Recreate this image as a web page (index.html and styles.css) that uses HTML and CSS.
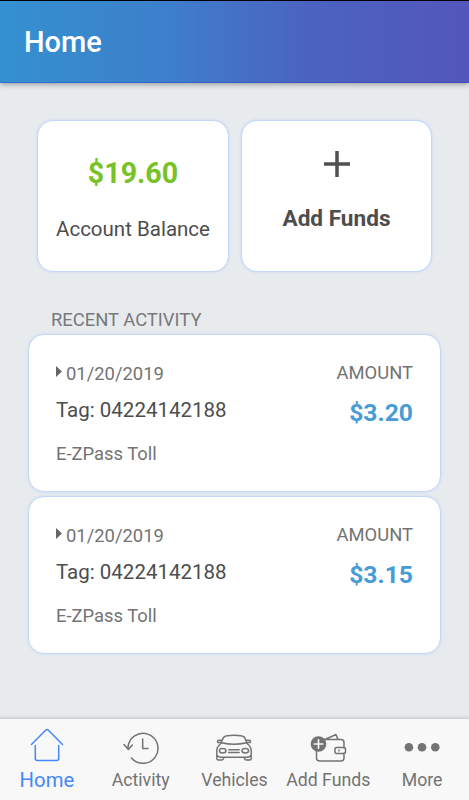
FILE: index.html
```html
<!DOCTYPE html>
<html lang="en">
<head>
<meta charset="utf-8">
<title>Home</title>
<link rel="stylesheet" href="styles.css">
</head>
<body>
<header class="header"><h1 class="title">Home</h1></header>
<main class="main">
  <section class="tiles">
    <div class="card tile">
      <div class="balance">$19.60</div>
      <div class="balance-label">Account Balance</div>
    </div>
    <div class="card tile">
      <svg class="plus" viewBox="0 0 28 28" width="28" height="28"><path d="M14 1v26M1 14h26"/></svg>
      <div class="add-label">Add Funds</div>
    </div>
  </section>
  <h2 class="section-title">RECENT ACTIVITY</h2>
  <section class="list">
    <article class="card entry">
      <div class="info">
        <div class="date"><span class="arrow"></span><span>01/20/2019</span></div>
        <div class="tag">Tag: 04224142188</div>
        <div class="kind">E-ZPass Toll</div>
      </div>
      <div class="cost">
        <div class="amount-label">AMOUNT</div>
        <div class="amount">$3.20</div>
      </div>
    </article>
    <article class="card entry">
      <div class="info">
        <div class="date"><span class="arrow"></span><span>01/20/2019</span></div>
        <div class="tag">Tag: 04224142188</div>
        <div class="kind">E-ZPass Toll</div>
      </div>
      <div class="cost">
        <div class="amount-label">AMOUNT</div>
        <div class="amount">$3.15</div>
      </div>
    </article>
  </section>
</main>
<nav class="nav">
  <a class="item active">
    <svg class="icon" viewBox="0 0 40 40" width="40" height="40"><path d="M4.500 20.500L18.600 6.300Q20 4.900 21.400 6.300L35.500 20.500M8.300 21.500V34.500Q8.300 36.500 10.300 36.500H29.700Q31.700 36.500 31.700 34.500V21.500"/></svg>
    <span class="item-label">Home</span>
  </a>
  <a class="item">
    <svg class="icon" viewBox="0 0 40 40" width="40" height="40"><path d="M7 23.500A15 15 0 1 1 10.500 34M3 20.500L7.300 25.500L11.300 21M21.700 15V24.500H27"/></svg>
    <span class="item-label">Activity</span>
  </a>
  <a class="item">
    <svg class="icon" viewBox="0 0 40 40" width="40" height="40"><path d="M6.500 20L9.500 13.500Q10.500 12 13 11.700Q20 10.600 27 11.700Q29.500 12 30.500 13.500L33.500 20M7.500 18.800Q20 21.800 32.500 18.800M6.500 20Q2.800 22.500 2.800 27V34.500Q2.800 36 4.300 36H7.500Q9 36 9.500 34.500L10 33.200H30L30.500 34.500Q31 36 32.500 36H35.700Q37.200 36 37.200 34.500V27Q37.200 22.500 33.500 20M3 31.500Q4.500 33.200 7 33.200H33Q35.500 33.200 37 31.500M6.800 18.500H4Q2.500 16.500 5 16.200H8M33.200 18.500H36Q37.500 16.500 35 16.200H32M14.800 25.700H25.200M14.800 28.400H25.200"/><ellipse cx="8.700" cy="26.800" rx="3.300" ry="2.200"/><ellipse cx="31.300" cy="26.800" rx="3.300" ry="2.200"/></svg>
    <span class="item-label">Vehicles</span>
  </a>
  <a class="item">
    <svg class="icon" viewBox="0 0 40 40" width="40" height="40"><path d="M16 15.500H33Q36 15.500 36 18.500V24M36 29V34Q36 37 33 37H12Q8.500 37 8.500 34V26M18 15L28 10.500L30 15.500M28.500 23.500H36Q37.500 23.500 37.500 25V28Q37.500 29.500 36 29.500H28.500Q27 29.500 27 28V25Q27 23.500 28.500 23.500Z"/><circle class="fill" cx="31" cy="26.500" r=".9"/><circle class="fill" cx="10.500" cy="20" r="7.800"/><path class="knock" d="M10.500 15.800V24.200M6.300 20H14.700"/></svg>
    <span class="item-label">Add Funds</span>
  </a>
  <a class="item">
    <svg class="icon" viewBox="0 0 40 40" width="40" height="40"><g class="fill"><circle cx="6.900" cy="23.300" r="4.300"/><circle cx="20" cy="23.300" r="4.300"/><circle cx="33.300" cy="23.300" r="4.300"/></g></svg>
    <span class="item-label">More</span>
  </a>
</nav>
</body>
</html>
```
FILE: styles.css
```css
* { box-sizing: border-box; }
body {
  margin: 0;
  height: 800px;
  display: flex;
  flex-direction: column;
  overflow: hidden;
  background: #e8ebee;
  color: #4d4d4d;
  font-family: Roboto, sans-serif;
  white-space: nowrap;
}
.header {
  height: 83px;
  flex: none;
  padding: 23px 24px 0;
  border-top: 1px solid #000;
  border-bottom: 1px solid rgba(20, 60, 200, .35);
  background: linear-gradient(90deg, #3490d0, #3d80cb 35%, #4471c6 50%, #4b63c0 66%, #5356bc) border-box;
  box-shadow: 0 1px 6px rgba(0, 0, 0, .4);
}
.title { margin: 0; font-size: 29px; line-height: 36px; font-weight: 500; color: #fff; }
.main { flex: 1; padding: 37px 28px 0; }
.tiles { display: grid; grid-template-columns: 192px 191px; gap: 12px; padding-left: 9px; }
.card {
  background: #fff;
  border: 1px solid #c3d7f6;
  border-radius: 16px;
  box-shadow: 0 0 3px #c6d7f3;
}
.tile { height: 152px; display: flex; flex-direction: column; align-items: center; }
.balance { margin-top: 34px; font-size: 28.600px; line-height: 36px; font-weight: 700; color: #76c227; }
.balance-label { margin-top: 26px; font-size: 20.500px; line-height: 24px; }
.plus { margin-top: 29px; fill: none; stroke: #505050; stroke-width: 3.500; }
.add-label { margin-top: 27px; font-size: 22.600px; line-height: 28px; font-weight: 700; }
.section-title { margin: 36px 0 2px 23px; font-size: 18.400px; line-height: 24px; font-weight: 400; color: #77797b; }
.list { display: grid; gap: 4px; }
.entry { height: 158px; padding: 26px 27px 0; display: flex; justify-content: space-between; }
.date { display: flex; gap: 4px; font-size: 18.400px; line-height: 26px; color: #737373; }
.arrow { width: 6px; height: 11px; margin-top: 5px; background: #666; clip-path: polygon(0 0, 100% 50%, 0 100%); }
.tag { margin-top: 10px; font-size: 20.500px; line-height: 26px; }
.kind { margin-top: 19px; font-size: 18.400px; line-height: 24px; color: #737373; }
.cost { text-align: right; }
.amount-label { font-size: 18.400px; line-height: 24px; color: #737373; }
.amount { margin-top: 13px; font-size: 24.700px; line-height: 30px; font-weight: 700; color: #489cd6; }
.nav {
  height: 82px;
  flex: none;
  display: grid;
  grid-template-columns: repeat(5, 1fr);
  background: #f8f8f8;
  border-top: 1px solid #cfd1d3;
  box-shadow: 0 -1px 3px rgba(0, 0, 0, .12);
}
.item { display: flex; flex-direction: column; align-items: center; padding-top: 5px; color: #737373; }
.active { color: #4388fa; }
.icon { fill: none; stroke: currentColor; stroke-width: 1.500; stroke-linecap: round; stroke-linejoin: round; }
.fill { fill: currentColor; stroke: none; }
.knock { stroke: #f8f8f8; stroke-width: 1.700; }
.item-label { margin-top: 4px; font-size: 17.700px; line-height: 24px; }
.active .item-label { font-size: 20.300px; }
```
